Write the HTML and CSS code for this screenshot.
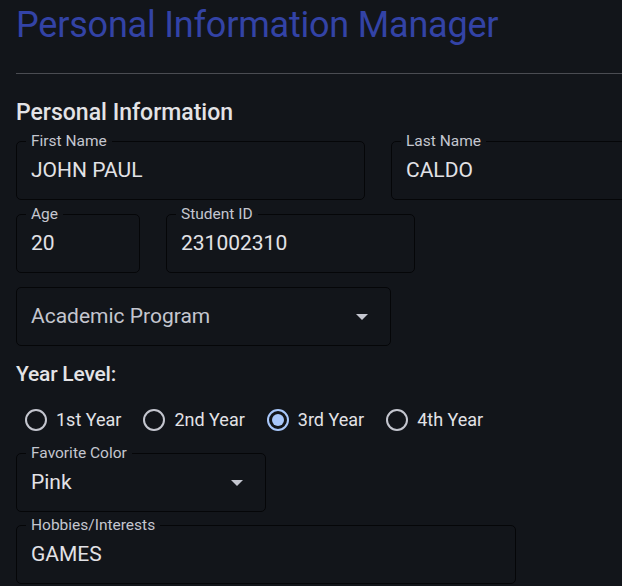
FILE: index.html
```html
<!DOCTYPE html>
<html>
<head>
<meta charset="utf-8">
<link rel="stylesheet" href="styles.css">
</head>
<body>
<div class="page">
  <h1 class="title">Personal Information Manager</h1>
  <div class="divider"></div>
  <h2 class="section">Personal Information</h2>
  <div class="form">
    <div class="row">
      <div class="field w-first"><span class="field-label">First Name</span><span class="value">JOHN PAUL</span></div>
      <div class="field w-last"><span class="field-label">Last Name</span><span class="value">CALDO</span></div>
    </div>
    <div class="row">
      <div class="field w-age"><span class="field-label">Age</span><span class="value">20</span></div>
      <div class="field w-id"><span class="field-label">Student ID</span><span class="value">231002310</span></div>
    </div>
    <div class="row">
      <div class="field select w-program"><span class="value placeholder">Academic Program</span><span class="caret"></span></div>
    </div>
    <div class="group-label">Year Level:</div>
    <div class="radios">
      <label class="radio"><span class="circle"></span>1st Year</label>
      <label class="radio"><span class="circle"></span>2nd Year</label>
      <label class="radio"><span class="circle on"></span>3rd Year</label>
      <label class="radio"><span class="circle"></span>4th Year</label>
    </div>
    <div class="row tight">
      <div class="field select w-color"><span class="field-label">Favorite Color</span><span class="value">Pink</span><span class="caret"></span></div>
    </div>
    <div class="row">
      <div class="field w-hobby"><span class="field-label">Hobbies/Interests</span><span class="value">GAMES</span></div>
    </div>
  </div>
</div>
</body>
</html>
```
FILE: styles.css
```css
html, body {
  margin: 0;
  padding: 0;
  background: #12151a;
  overflow: hidden;
  height: 586px;
}
body {
  font-family: Roboto, "Liberation Sans", sans-serif;
  color: #e2e2e6;
}
.page {
  padding: 0 0 0 16px;
  width: 800px;
}
.title {
  margin: 0;
  padding-top: 5px;
  font-size: 36px;
  line-height: 40px;
  font-weight: 400;
  color: #3343a6;
  letter-spacing: -0.2px;
}
.divider {
  margin-top: 28px;
  height: 1px;
  background: #4a4c52;
}
.section {
  margin: 25px 0 0 0;
  font-size: 23px;
  line-height: 28px;
  font-weight: 500;
  color: #e3e3e6;
}
.form {
  margin-top: 14px;
  display: flex;
  flex-direction: column;
}
.row {
  display: flex;
  gap: 26px;
  margin-bottom: 14px;
}
.row.tight {
  margin-bottom: 13px;
}
.field {
  position: relative;
  box-sizing: border-box;
  height: 59px;
  border: 1px solid #050608;
  border-radius: 5px;
  display: flex;
  align-items: center;
  padding: 0 14px;
}
.field-label {
  position: absolute;
  top: -10px;
  left: 9px;
  padding: 0 5px;
  background: #12151a;
  font-size: 15.5px;
  line-height: 18px;
  color: #c4c6cf;
}
.value {
  font-size: 21px;
  line-height: 24px;
  color: #e2e2e6;
  margin-top: -1px;
}
.placeholder {
  color: #c4c6cf;
}
.caret {
  margin-left: auto;
  margin-right: 8px;
  width: 0;
  height: 0;
  border-left: 6px solid transparent;
  border-right: 6px solid transparent;
  border-top: 6px solid #c4c6cf;
}
.w-first { width: 349px; }
.w-last { width: 349px; }
.w-age { width: 124px; }
.w-id { width: 249px; }
.w-program { width: 375px; }
.w-color { width: 250px; }
.w-hobby { width: 500px; }
.group-label {
  margin-top: 2px;
  font-size: 21px;
  line-height: 24px;
  font-weight: 500;
  color: #e3e3e6;
  letter-spacing: -0.2px;
}
.radios {
  display: flex;
  align-items: center;
  margin: 23px 0 22px 9px;
  gap: 22px;
}
.radio {
  display: flex;
  align-items: center;
  gap: 9px;
  font-size: 18px;
  line-height: 22px;
  color: #e2e2e6;
}
.circle {
  box-sizing: border-box;
  width: 22px;
  height: 22px;
  border: 2px solid #c4c6cf;
  border-radius: 50%;
  display: flex;
  align-items: center;
  justify-content: center;
}
.circle.on {
  border-color: #a8c7fa;
}
.circle.on::after {
  content: "";
  width: 12px;
  height: 12px;
  border-radius: 50%;
  background: #a8c7fa;
}
```
